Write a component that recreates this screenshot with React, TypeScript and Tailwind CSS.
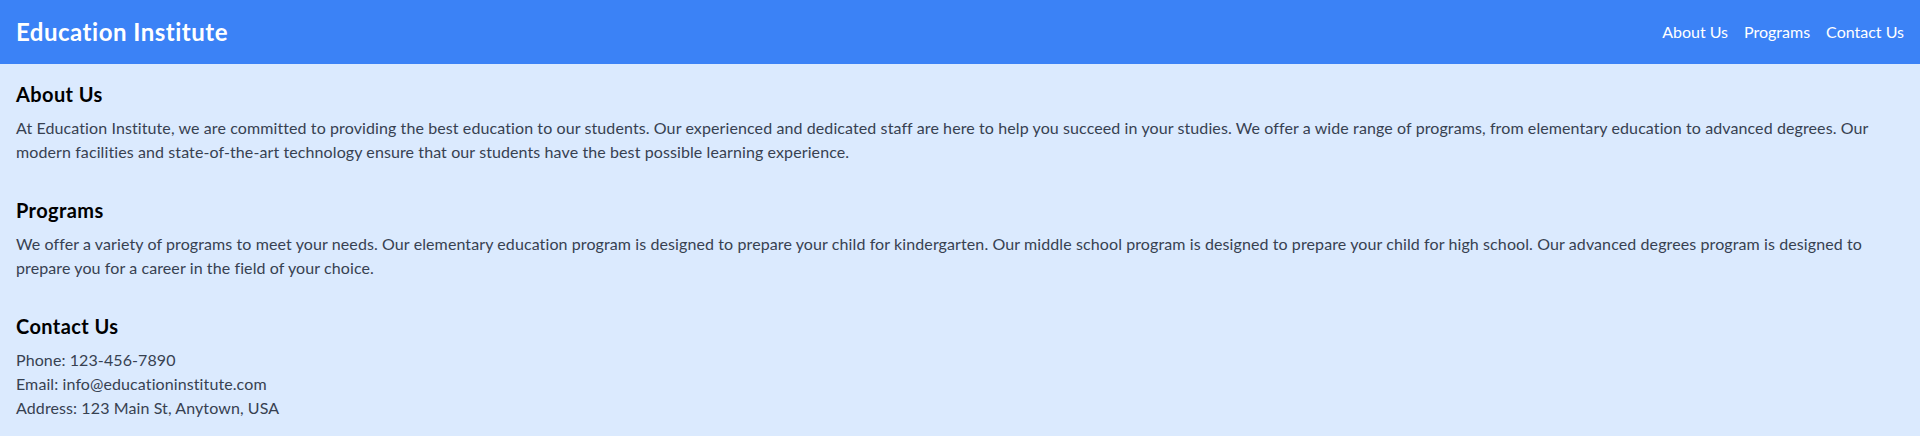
export default function App() {
  return (
    <div className="min-h-[436px] bg-[#dbeafe]" style={{ fontFamily: "Lato, 'Noto Sans', sans-serif" }}>
      <header className="h-16 bg-[#3b82f6] px-4 flex items-center justify-between">
        <h1 className="text-2xl font-bold text-white tracking-[0.5px]">Education Institute</h1>
        <nav className="flex gap-4 text-white text-base">
          <a href="#about">About Us</a>
          <a href="#programs">Programs</a>
          <a href="#contact">Contact Us</a>
        </nav>
      </header>
      <main className="p-4">
        <section className="mb-8">
          <h2 className="text-xl font-bold text-black mb-2 tracking-[0.4px]">About Us</h2>
          <p className="text-base text-[#374151] tracking-[0.1px]">
            At Education Institute, we are committed to providing the best education to our students. Our experienced and dedicated staff are here to help you succeed in your studies. We offer a wide range of programs, from elementary education to advanced degrees. Our modern facilities and state-of-the-art technology ensure that our students have the best possible learning experience.
          </p>
        </section>
        <section className="mb-8">
          <h2 className="text-xl font-bold text-black mb-2 tracking-[0.4px]">Programs</h2>
          <p className="text-base text-[#374151] tracking-[0.1px]">
            We offer a variety of programs to meet your needs. Our elementary education program is designed to prepare your child for kindergarten. Our middle school program is designed to prepare your child for high school. Our advanced degrees program is designed to prepare you for a career in the field of your choice.
          </p>
        </section>
        <section>
          <h2 className="text-xl font-bold text-black mb-2 tracking-[0.4px]">Contact Us</h2>
          <p className="text-base text-[#374151] tracking-[0.1px]">Phone: 123-456-7890</p>
          <p className="text-base text-[#374151] tracking-[0.1px]">Email: info@educationinstitute.com</p>
          <p className="text-base text-[#374151] tracking-[0.1px]">Address: 123 Main St, Anytown, USA</p>
        </section>
      </main>
    </div>
  );
}
